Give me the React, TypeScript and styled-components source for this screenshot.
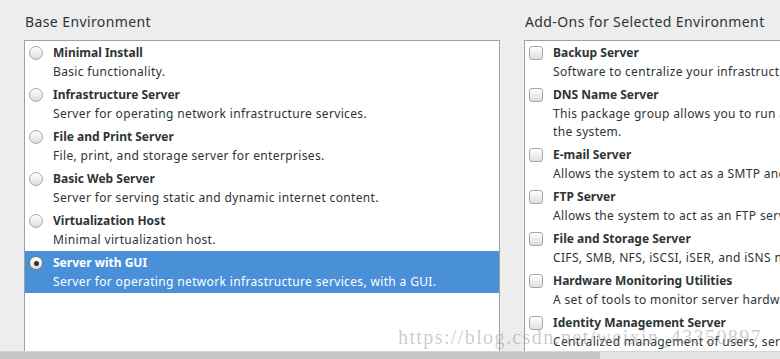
import React from "react";
import styled, { createGlobalStyle } from "styled-components";

const GlobalStyle = createGlobalStyle`
  html, body {
    margin: 0;
    padding: 0;
    background: #ededed;
    overflow: hidden;
  }
  body {
    font-family: "Noto Sans", "DejaVu Sans", sans-serif;
    color: #2e3436;
  }
`;

interface IOption {
  title: string;
  lines: string[];
}

const environments: IOption[] = [
  { title: "Minimal Install", lines: ["Basic functionality."] },
  {
    title: "Infrastructure Server",
    lines: ["Server for operating network infrastructure services."],
  },
  {
    title: "File and Print Server",
    lines: ["File, print, and storage server for enterprises."],
  },
  {
    title: "Basic Web Server",
    lines: ["Server for serving static and dynamic internet content."],
  },
  { title: "Virtualization Host", lines: ["Minimal virtualization host."] },
  {
    title: "Server with GUI",
    lines: [
      "Server for operating network infrastructure services, with a GUI.",
    ],
  },
];

const addons: IOption[] = [
  {
    title: "Backup Server",
    lines: ["Software to centralize your infrastructure's backup services."],
  },
  {
    title: "DNS Name Server",
    lines: [
      "This package group allows you to run a DNS name server (BIND) on",
      "the system.",
    ],
  },
  {
    title: "E-mail Server",
    lines: ["Allows the system to act as a SMTP and/or IMAP e-mail server."],
  },
  {
    title: "FTP Server",
    lines: ["Allows the system to act as an FTP server."],
  },
  {
    title: "File and Storage Server",
    lines: ["CIFS, SMB, NFS, iSCSI, iSER, and iSNS network storage server."],
  },
  {
    title: "Hardware Monitoring Utilities",
    lines: ["A set of tools to monitor server hardware."],
  },
  {
    title: "Identity Management Server",
    lines: ["Centralized management of users, servers and authentication policies."],
  },
];

const Page = styled.div`
  position: relative;
  height: 359px;
  overflow: hidden;
  display: flex;
  flex-direction: column;
`;

const Columns = styled.div`
  flex: 1;
  display: flex;
  gap: 24px;
  padding-left: 24px;
  overflow: hidden;
`;

const Column = styled.section`
  width: 476px;
  flex-shrink: 0;
  display: flex;
  flex-direction: column;
`;

const Heading = styled.h2`
  margin: 0;
  height: 40px;
  padding-top: 12px;
  box-sizing: border-box;
  font-size: 14px;
  font-weight: normal;
  line-height: 20px;
  letter-spacing: 0.4px;
  padding-left: 1px;
  color: #2e3436;
`;

const ListBox = styled.div`
  flex: 1;
  background: #ffffff;
  border: 1px solid #a1a1a1;
  border-bottom: none;
  overflow: hidden;
`;

const Row = styled.div<{ $selected?: boolean }>`
  display: flex;
  padding: 2px 0;
  background: ${(p) => (p.$selected ? "#4a90d9" : "transparent")};
  color: ${(p) => (p.$selected ? "#ffffff" : "#2e3436")};
`;

const Marker = styled.div`
  width: 14px;
  height: 20px;
  padding-left: 4px;
  flex-shrink: 0;
  display: flex;
  align-items: center;
`;

const Radio = styled.span<{ $checked?: boolean }>`
  width: 14px;
  height: 14px;
  box-sizing: border-box;
  border-radius: 50%;
  border: 1px solid ${(p) => (p.$checked ? "#7a7e7f" : "#a7a9a9")};
  background: linear-gradient(#ffffff, #dcdcdc);
  display: flex;
  align-items: center;
  justify-content: center;

  &::after {
    content: "";
    display: ${(p) => (p.$checked ? "block" : "none")};
    width: 5px;
    height: 5px;
    border-radius: 50%;
    background: #2e3436;
  }
`;

const Checkbox = styled.span`
  width: 14px;
  height: 14px;
  box-sizing: border-box;
  border-radius: 3px;
  border: 1px solid #a7a9a9;
  background: linear-gradient(#ffffff, #dedede);
`;

const Texts = styled.div`
  padding-left: 10px;
  min-width: 0;
`;

const Title = styled.div`
  font-size: 12px;
  font-weight: bold;
  line-height: 20px;
  white-space: nowrap;
`;

const Desc = styled.div`
  font-size: 12px;
  line-height: 18px;
  letter-spacing: 0.35px;
  white-space: nowrap;
`;

const Scrollbar = styled.div`
  height: 7px;
  flex-shrink: 0;
  display: flex;
  background: #e4e4e4;
  border-top: 1px solid #d6d6d6;
`;

const Thumb = styled.div`
  width: 600px;
  background: #c6c6c6;
`;

const Watermark = styled.div`
  position: absolute;
  left: 398px;
  top: 326px;
  font-family: "Liberation Serif", "DejaVu Serif", serif;
  font-size: 20px;
  letter-spacing: 1.4px;
  color: rgba(140, 140, 140, 0.45);
  white-space: nowrap;
  pointer-events: none;
`;

const OptionRow = ({
  option,
  kind,
  selected,
}: {
  option: IOption;
  kind: "radio" | "check";
  selected?: boolean;
}) => (
  <Row $selected={selected}>
    <Marker>
      {kind === "radio" ? <Radio $checked={selected} /> : <Checkbox />}
    </Marker>
    <Texts>
      <Title>{option.title}</Title>
      {option.lines.map((line) => (
        <Desc key={line}>{line}</Desc>
      ))}
    </Texts>
  </Row>
);

const App = () => {
  return (
    <>
      <GlobalStyle />
      <Page>
        <Columns>
          <Column>
            <Heading>Base Environment</Heading>
            <ListBox>
              {environments.map((env) => (
                <OptionRow
                  key={env.title}
                  option={env}
                  kind="radio"
                  selected={env.title === "Server with GUI"}
                />
              ))}
            </ListBox>
          </Column>
          <Column>
            <Heading>Add-Ons for Selected Environment</Heading>
            <ListBox>
              {addons.map((addon) => (
                <OptionRow key={addon.title} option={addon} kind="check" />
              ))}
            </ListBox>
          </Column>
        </Columns>
        <Scrollbar>
          <Thumb />
        </Scrollbar>
        <Watermark>https://blog.csdn.net/weixin_43350897</Watermark>
      </Page>
    </>
  );
};

export default App;
